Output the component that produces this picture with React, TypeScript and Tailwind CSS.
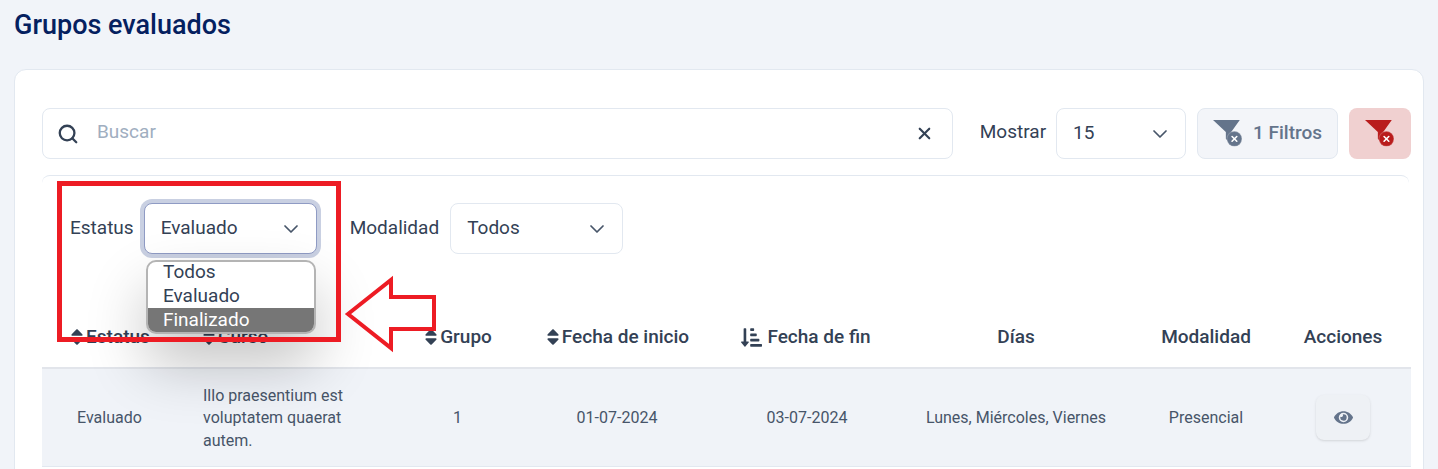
import { ChevronDown, Search, X } from 'lucide-react';
import { FaEye, FaSort, FaSortAmountDownAlt } from 'react-icons/fa';

function FunnelIcon({ fill, badge }: { fill: string; badge: string }) {
  return (
    <svg width="30" height="27" viewBox="0 0 28 25">
      <path d="M0 0h25l-8 11v9.500c-2 0-3.500-1-5-3V11z" fill={fill} />
      <circle cx="20" cy="17.500" r="7" fill={badge} stroke="#fff" strokeOpacity="0.2" />
      <path d="M17.800 15.300l4.400 4.400M22.200 15.300l-4.400 4.400" stroke="#fff" strokeWidth="1.500" strokeLinecap="round" />
    </svg>
  );
}

function SelectBox({ value, width, focused }: { value: string; width: string; focused?: boolean }) {
  return (
    <div
      className={`flex h-[51px] items-center justify-between rounded-lg bg-white pl-[16px] pr-[13px] text-[19px] text-[#334155] ${width} ${
        focused
          ? 'border border-[#8f9bc4] shadow-[0_0_0_4px_#c9d0e2]'
          : 'border border-[#e2e8f0]'
      }`}
    >
      <span className="pb-[1px]">{value}</span>
      <ChevronDown size={24} strokeWidth={1.75} className="text-[#475569]" />
    </div>
  );
}

function SortHeader({ label, icon, left }: { label: string; icon: 'sort' | 'active'; left?: boolean }) {
  return (
    <span className={`flex items-center ${left ? 'justify-start' : 'justify-center pr-[2px]'}`}>
      {icon === 'sort' && <FaSort size={20} className="-mr-[1px] text-[#334155]" />}
      {icon === 'active' && <FaSortAmountDownAlt size={21} className="mr-[5px] text-[#334155]" />}
      {label}
    </span>
  );
}

export default function App() {
  return (
    <div className="relative h-[469px] overflow-hidden bg-[#f1f4f9] font-['Roboto',sans-serif]">
      <h1 className="pl-[14px] pt-[10px] text-[27px] font-medium leading-[30px] text-[#04205f]">Grupos evaluados</h1>

      <div className="mx-[14px] mt-[29px] h-[500px] rounded-t-xl border border-[#e2e8f0] bg-white pl-[27px] pr-[12px] pt-[38px]">
        {/* Search bar and buttons */}
        <div className="flex items-center">
          <div className="flex h-[51px] w-[911px] items-center rounded-lg border border-[#e2e8f0] bg-white pl-[14px] pr-[18px]">
            <Search size={22} strokeWidth={2.5} className="text-[#334155]" />
            <span className="ml-[18px] flex-1 pb-[2px] text-[19px] text-[#a0aec0]">Buscar</span>
            <X size={19} strokeWidth={2.75} className="text-[#334155]" />
          </div>
          <span className="ml-[27px] mr-[10px] pb-[2px] text-[19px] text-[#334155]">Mostrar</span>
          <SelectBox value="15" width="w-[130px]" />
          <div className="ml-[11px] flex h-[51px] w-[141px] items-center justify-center gap-[10px] rounded-lg border border-[#e2e8f0] bg-[#f3f5f9] pb-[1px] text-[19px] font-medium text-[#64748b]">
            <FunnelIcon fill="#64748b" badge="#64748b" />
            1 Filtros
          </div>
          <div className="ml-[11px] flex h-[51px] w-[62px] items-center justify-center rounded-lg bg-[#f0d0d0]">
            <FunnelIcon fill="#b91c1c" badge="#b91c1c" />
          </div>
        </div>

        {/* Filters */}
        <div className="mt-[16px] w-[1367px] rounded-t-lg border-t border-[#e2e8f0] pl-[28px] pt-[27px]">
          <div className="flex items-center">
            <span className="mr-[10px] pb-[1px] text-[19px] text-[#334155]">Estatus</span>
            <SelectBox value="Evaluado" width="w-[173px]" focused />
            <span className="ml-[33px] mr-[11px] pb-[1px] text-[19px] text-[#334155]">Modalidad</span>
            <SelectBox value="Todos" width="w-[173px]" />
          </div>
        </div>

        {/* Table */}
        <table className="mt-[57px] w-[1369px] table-fixed border-collapse text-center text-[#334155]">
          <colgroup>
            <col className="w-[135px]" />
            <col className="w-[223px]" />
            <col className="w-[115px]" />
            <col className="w-[204px]" />
            <col className="w-[176px]" />
            <col className="w-[242px]" />
            <col className="w-[138px]" />
            <col className="w-[136px]" />
          </colgroup>
          <thead>
            <tr className="h-[57px] border-b-2 border-[#e2e5eb] text-[19px] font-medium">
              <th className="pb-[4px] font-medium"><SortHeader label="Estatus" icon="sort" /></th>
              <th className="pb-[4px] pl-[22px] text-left font-medium"><SortHeader label="Curso" icon="sort" left /></th>
              <th className="pb-[4px] font-medium"><SortHeader label="Grupo" icon="sort" /></th>
              <th className="pb-[4px] font-medium"><SortHeader label="Fecha de inicio" icon="sort" /></th>
              <th className="pb-[4px] font-medium"><SortHeader label="Fecha de fin" icon="active" /></th>
              <th className="pb-[4px] font-medium">Días</th>
              <th className="pb-[4px] font-medium">Modalidad</th>
              <th className="pb-[4px] font-medium">Acciones</th>
            </tr>
          </thead>
          <tbody>
            <tr className="h-[98px] border-b border-[#e2e8f0] bg-[#f0f3f8] text-[16px] text-[#475569]">
              <td className="pt-[2px]">Evaluado</td>
              <td className="pl-[26px] pr-[50px] pt-[2px] text-left leading-[22.5px]">Illo praesentium est voluptatem quaerat autem.</td>
              <td className="pt-[2px]">1</td>
              <td className="pt-[2px]">01-07-2024</td>
              <td className="pt-[2px]">03-07-2024</td>
              <td className="pt-[2px]">Lunes, Miércoles, Viernes</td>
              <td className="pt-[2px]">Presencial</td>
              <td>
                <div className="mx-auto flex h-[45px] w-[54px] items-center justify-center rounded-lg bg-[#eef1f5] shadow-sm">
                  <FaEye size={19} className="text-[#64748b]" />
                </div>
              </td>
            </tr>
          </tbody>
        </table>
      </div>

      {/* Open dropdown */}
      <div className="absolute left-[146px] top-[260px] w-[170px] overflow-hidden rounded-[10px] border-2 border-[#b4b4b4] bg-white text-[19px] leading-[24px] text-[#334155] shadow-[0_30px_60px_rgba(0,0,0,0.24)]">
        <div className="h-[22px] pl-[15px] leading-[20px]">Todos</div>
        <div className="pl-[15px] leading-[24px]">Evaluado</div>
        <div className="bg-[#767676] pl-[15px] text-white">Finalizado</div>
      </div>

      {/* Annotation */}
      <div className="absolute left-[57px] top-[181px] h-[161px] w-[284px] border-[5px] border-[#ed1c24]" />
      <svg className="absolute left-[340px] top-[272px]" width="104" height="84" viewBox="0 0 104 84">
        <path d="M8 42L51 8V25H94V57H51V76z" fill="none" stroke="#ed1c24" strokeWidth="4" />
      </svg>
    </div>
  );
}
